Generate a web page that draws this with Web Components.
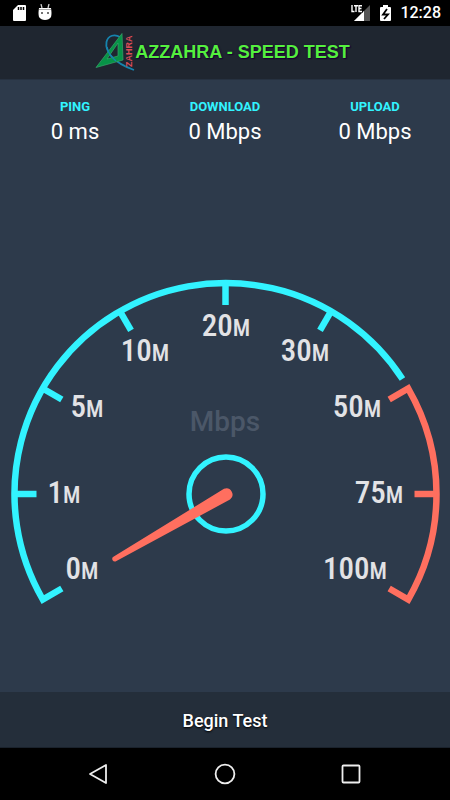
<!DOCTYPE html>
<html lang="en">
<head>
<meta charset="utf-8">
<meta name="viewport" content="width=device-width, initial-scale=1">
<title>Azzahra - Speed Test</title>
<style>
  html, body { margin: 0; height: 100%; background: #000; }
  body { font-family: Roboto, "Liberation Sans", sans-serif; }
</style>
</head>
<body>
<speed-app></speed-app>
<script>
  const define = (name, html, setup) => customElements.define(name, class extends HTMLElement {
    constructor() {
      super();
      const t = document.createElement('template');
      t.innerHTML = html;
      this.attachShadow({ mode: 'open' }).append(t.content.cloneNode(true));
      if (setup) setup(this.shadowRoot, this);
    }
  });

  define('status-bar', `
    <style>
      :host { display: flex; align-items: center; justify-content: space-between; height: 26px; padding: 0 9px 0 12px; background: #000; color: #fff; }
      .group { display: flex; align-items: center; gap: 9px; }
      svg { display: block; }
      time { font-size: 16px; line-height: 28px; font-weight: 500; }
    </style>
    <div class="group">
      <svg width="16" height="18" viewBox="0 0 16 18" aria-label="SD card"><path fill="#fff" d="M6 1H13Q14 1 14 2V16Q14 17 13 17H2Q1 17 1 16V6Z"/><path stroke="#000" stroke-width="1.5" d="M6.5 3V6M9 3V6M11.500 3V6"/></svg>
      <svg width="16" height="18" viewBox="0 0 16 18" aria-label="Android"><path d="M4 0L5 4M12 0L11 4" stroke="#ccc" stroke-width="1.300"/><path fill="#fff" d="M2 4H14Q15 10 14 13Q12 16 8 16T2 13Q1 10 2 4Z"/><path d="M2 5.500H14" stroke="#aaa"/><circle cx="5" cy="9" r="1" fill="#444"/><circle cx="11" cy="9" r="1" fill="#444"/></svg>
    </div>
    <div class="group">
      <svg width="20" height="18" viewBox="0 0 20 18" aria-label="LTE signal"><path fill="#555" d="M19 1V17H3Z"/><path fill="#fff" d="M13 7V17H3Z"/><path d="M1 1V7H4M4 2H8M6 1V8M12 1.500H9V7H12" fill="none" stroke="#000" stroke-width="3"/><path d="M1 1V7.500H3.500M3 1.700H7M5 1.700V8M11 1.700H8V7.500H11M8 4.500H10.500" fill="none" stroke="#fff" stroke-width="1.400"/></svg>
      <svg width="11" height="18" viewBox="0 0 11 18" aria-label="Battery charging"><path fill="#fff" d="M3 1H8V3H10Q11 3 11 4V16Q11 17 10 17H1Q0 17 0 16V4Q0 3 1 3H3Z"/><path d="M7 5L3 10.500H8L4 15" fill="none" stroke="#000" stroke-width="1.800"/></svg>
      <time>12:28</time>
    </div>`);

  define('app-header', `
    <style>
      :host { display: flex; align-items: center; justify-content: center; height: 54px; padding: 0 5px 2px 0; background: #1f2630; border-bottom: 1px solid #263140; box-sizing: border-box; }
      svg { display: block; flex: none; }
      h1 { margin: 0; color: #54f03e; font: bold 18px/24px "Liberation Sans", Arial, sans-serif; text-shadow: 0 0 2px #220038, 1px 1px 1px #180030; white-space: nowrap; }
    </style>
    <svg width="40" height="38" viewBox="0 0 40 38" role="img" aria-label="Azzahra logo">
      <path d="M25 4C20 1 13 2 11.500 9C10 18 17 29 39 37" fill="none" stroke="#1684ae" stroke-width="1.800"/>
      <path d="M27 0.500L1 34.500L28 27Z M23 10V23L12 26Z" fill="#079347" fill-rule="evenodd" stroke="#3aa56c" stroke-width=".7"/>
      <path d="M12 14C13 20 16 24 21 28" fill="none" stroke="#1684ae" stroke-width="1.500"/>
      <text transform="translate(37 34) rotate(-90)" font-family="Liberation Sans" font-size="9" font-weight="bold" fill="#dc4c58">ZAHRA</text>
    </svg>
    <h1><slot></slot></h1>`);

  define('speed-stat', `
    <style>
      :host { display: flex; flex-direction: column; align-items: center; flex: 1; }
      .label { color: #32f3ff; font-size: 13px; line-height: 16px; font-weight: 700; }
      .value { color: #fff; font-size: 22px; line-height: 34px; }
    </style>
    <div class="label"><slot name="label"></slot></div>
    <div class="value"><slot></slot></div>`);

  define('speed-gauge', `
    <style>
      :host { display: block; width: 100%; }
      svg { display: block; width: 100%; }
      .arc { fill: none; stroke-width: 6.500; }
      .cyan { stroke: #32f3ff; } .red { stroke: #ff6f5f; }
      .n { fill: #e2e2e5; font: 500 31px "Roboto Condensed", Roboto, sans-serif; text-anchor: middle; }
      .n tspan { font-size: 23px; }
      .unit { fill: #4b5768; font-weight: 500; font-size: 28px; text-anchor: middle; }
    </style>
    <svg viewBox="0 0 450 340" role="img" aria-label="Speed gauge at 0 Mbps">
      <g id="dial"></g>
      <text class="unit" x="225" y="157">Mbps</text>
      <circle class="arc cyan" style="stroke-width:5.500" cx="226" cy="220" r="37"/>
      <path fill="#ff6f5f" d="M113 283L224 214.800A6.200 6.200 0 0 1 230 225.500L115.500 287.500A2.700 2.700 0 0 1 113 283Z"/>
    </svg>`, root => {
    const pt = (deg, r) => {
      const a = deg * Math.PI / 180;
      return (225.5 + r * Math.cos(a)).toFixed(2) + ' ' + (220 - r * Math.sin(a)).toFixed(2);
    };
    const R = 211, T = 189;
    let s = `<path class="arc cyan" d="M${pt(210, T)}L${pt(210, R)}A${R} ${R} 0 0 1 ${pt(33, R)}"/>
      <path class="arc red" d="M${pt(30, T)}L${pt(30, R)}A${R} ${R} 0 0 1 ${pt(-30, R)}L${pt(-30, T)}"/>`;
    for (const d of [180, 150, 120, 90, 60]) s += `<path class="arc cyan" d="M${pt(d, R)}L${pt(d, T)}"/>`;
    s += `<path class="arc red" d="M${pt(0, R)}L${pt(0, T)}"/>`;
    const labels = [[0, 82, 305], [1, 64, 229], [5, 87, 143], [10, 145, 87], [20, 226, 62], [30, 305, 87], [50, 357, 143], [75, 379, 229], [100, 355, 305]];
    for (const [n, x, y] of labels) s += `<text class="n" x="${x}" y="${y}">${n}<tspan>M</tspan></text>`;
    root.getElementById('dial').innerHTML = s;
  });

  define('begin-button', `
    <style>
      :host { display: block; }
      button { display: block; width: 100%; height: 56px; margin: 0; padding: 2px 0 0; border: 0; border-bottom: 1px solid #1a222c; background: #242e3a; color: #fff; font: 500 18px/24px Roboto, sans-serif; text-shadow: 0 1px 2px #000; }
    </style>
    <button type="button"><slot></slot></button>`);

  define('nav-bar', `
    <style>
      :host { display: flex; justify-content: center; height: 52px; background: #000; }
      nav { display: flex; width: 84%; }
      button { flex: 1; display: grid; place-items: center; padding: 0; border: 0; background: none; }
      svg { display: block; fill: none; stroke: #eee; stroke-width: 1.800; }
    </style>
    <nav aria-label="System">
      <button type="button" aria-label="Back"><svg width="22" height="22" viewBox="0 0 22 22"><path d="M18 2V20L2 11Z" stroke-linejoin="round"/></svg></button>
      <button type="button" aria-label="Home"><svg width="22" height="22" viewBox="0 0 22 22"><circle cx="11" cy="11" r="9.400"/></svg></button>
      <button type="button" aria-label="Recent apps"><svg width="22" height="22" viewBox="0 0 22 22"><rect x="2.500" y="2.500" width="17" height="17" rx="1"/></svg></button>
    </nav>`);

  define('speed-app', `
    <style>
      :host { display: flex; flex-direction: column; min-height: 100vh; background: #2d3a4b; }
      .stats { display: flex; padding: 19px 0 8px; }
      main { flex: 1; display: flex; align-items: center; padding-top: 39px; }
    </style>
    <status-bar></status-bar>
    <app-header>AZZAHRA - SPEED TEST</app-header>
    <section class="stats">
      <speed-stat><span slot="label">PING</span>0 ms</speed-stat>
      <speed-stat><span slot="label">DOWNLOAD</span>0 Mbps</speed-stat>
      <speed-stat><span slot="label">UPLOAD</span>0 Mbps</speed-stat>
    </section>
    <main><speed-gauge></speed-gauge></main>
    <begin-button>Begin Test</begin-button>
    <nav-bar></nav-bar>`);
</script>
</body>
</html>
